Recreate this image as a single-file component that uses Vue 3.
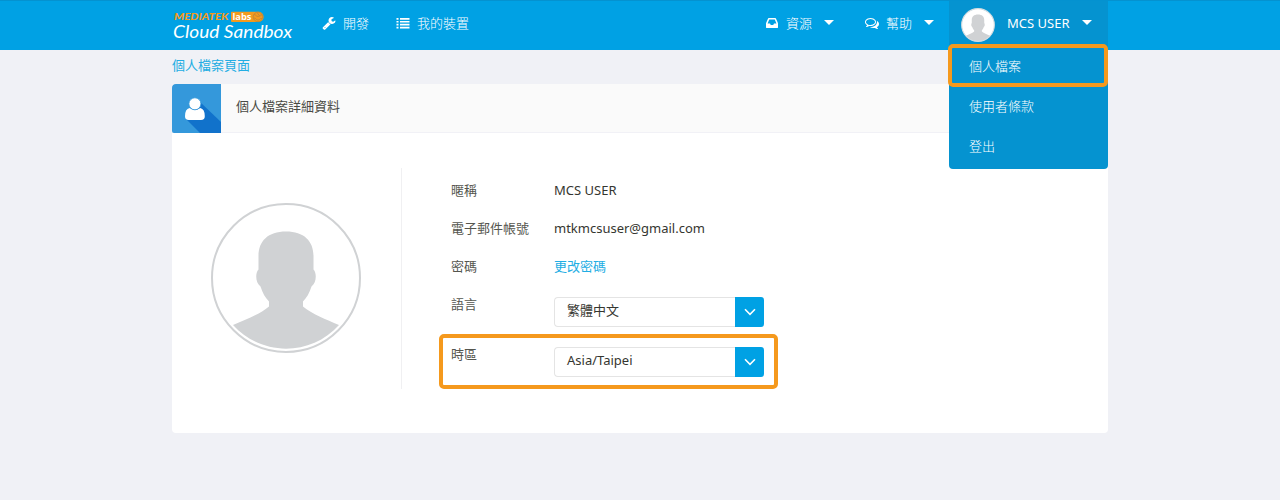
<script setup>
const profileMenu = ['個人檔案', '使用者條款', '登出']
const textRows = [
  { label: '暱稱', value: 'MCS USER', kind: 'caps' },
  { label: '電子郵件帳號', value: 'mtkmcsuser@gmail.com', kind: 'mail' },
  { label: '密碼', value: '更改密碼', kind: 'link' },
]
const selectRows = [
  { label: '語言', value: '繁體中文', marked: false },
  { label: '時區', value: 'Asia/Taipei', marked: true },
]
</script>

<template>
  <div class="page">
    <header class="topbar">
      <div class="container bar">
        <svg class="logo" width="122" height="34" viewBox="0 0 122 34">
          <text class="brand" x="2" y="11.800" textLength="54.500" lengthAdjust="spacingAndGlyphs">MEDIATEK</text>
          <path class="badge" d="M60 3.800h26.500a5 5 0 0 1 0 10.200H60a1 1 0 0 1-1-1V4.800a1 1 0 0 1 1-1z" />
          <circle class="ring" cx="86" cy="8.900" r="4.800" />
          <path class="wave" d="M82 6.500c2 0 2 2 4 2s2-2 4-1.500M82 10c2 0 2 2 4 2s2-2 4-1.500M85 4.500l3 4" />
          <text class="labs" x="60.500" y="12" textLength="19" lengthAdjust="spacingAndGlyphs">labs</text>
          <text class="cloud" x="1" y="30" textLength="119" lengthAdjust="spacingAndGlyphs">Cloud Sandbox</text>
        </svg>
        <a class="nav dev">
          <svg width="14" height="14" viewBox="0 0 1792 1792"><path d="M448 1472q0-26-19-45t-45-19-45 19-19 45 19 45 45 19 45-19 19-45zm644-420l-682 682q-37 37-90 37-52 0-91-37l-106-108q-38-36-38-90 0-53 38-91l681-681q39 98 114.500 173.500t173.500 114.500zm634-435q0 39-23 106-47 134-164.500 217.500t-258.500 83.500q-185 0-316.500-131.500t-131.500-316.500 131.500-316.500 316.500-131.500q58 0 121.500 16.500t107.500 46.500q16 11 16 28t-16 28l-293 169v224l193 107q5-3 79-48.500t135.500-81 70.500-35.500q15 0 23.500 10t8.500 25z" /></svg>
          <span>開發</span>
        </a>
        <a class="nav devices">
          <svg width="14" height="14" viewBox="0 0 14 14"><path d="M.500 2h2v1.700h-2zM.500 4.900h2v1.700h-2zM.500 7.800h2v1.700h-2zM.500 10.700h2v1.700h-2zM4 2h9.500v1.700H4zM4 4.900h9.500v1.700H4zM4 7.800h9.500v1.700H4zM4 10.700h9.500v1.700H4z" /></svg>
          <span>我的裝置</span>
        </a>
        <a class="nav resources">
          <svg width="14" height="14" viewBox="0 0 1792 1792"><path d="M1151 960h316q-1-3-2.500-8.500t-2.500-7.500l-212-496h-708l-212 496q-1 3-2.500 8.500t-2.500 7.500h316l95 192h320zm513 30v482q0 26-19 45t-45 19h-1408q-26 0-45-19t-19-45v-482q0-62 25-123l238-552q10-25 36.500-42t52.500-17h832q26 0 52.500 17t36.500 42l238 552q25 61 25 123z" /></svg>
          <span>資源</span><i class="caret"></i>
        </a>
        <a class="nav help">
          <svg width="14" height="14" viewBox="0 0 1792 1792"><path d="M704 384q-153 0-286 52t-211.500 141-78.500 191q0 82 53 158t149 132l97 56-35 84q34-20 62-39l44-31 53 10q78 14 153 14 153 0 286-52t211.500-141 78.500-191-78.500-191-211.500-141-286-52zm0-128q191 0 353.500 68.500t256.500 186.500 94 257-94 257-256.500 186.500-353.500 68.500q-86 0-176-16-124 88-278 128-36 9-86 16h-3q-11 0-20.500-8t-11.500-21q-1-3-1-6.500t.5-6.500 2-6l2.500-5 3.500-5.500 4-5 4.500-5 4-4.500q5-6 23-25t26-29.500 22.500-29 25-38.500 20.500-44q-124-72-195-177t-71-224q0-139 94-257t256.500-186.500 353.500-68.500zm822 1169q10 24 20.500 44t25 38.500 22.500 29 26 29.500 23 25q1 1 4 4.500t4.500 5 4 5 3.500 5.500l2.500 5 2 6 .5 6.500-1 6.500q-3 14-13 22t-22 7q-50-7-86-16-154-40-278-128-90 16-176 16-271 0-472-132 58 4 88 4 161 0 309-45t264-129q125-92 192-212t67-254q0-77-23-152 129 71 204 178t75 230q0 120-71 224.500t-195 176.500z" /></svg>
          <span>幫助</span><i class="caret"></i>
        </a>
        <div class="user">
          <svg class="face" width="34" height="34" viewBox="0 0 150 150">
            <circle cx="75" cy="75" r="72" fill="#fff" stroke="#d5dde1" stroke-width="5" />
            <use href="#person" />
          </svg>
          <span class="username">MCS USER</span><i class="caret"></i>
          <ul class="menu">
            <li v-for="(item, i) in profileMenu" :key="item" :class="{ marked: i === 0 }">{{ item }}</li>
          </ul>
        </div>
      </div>
    </header>

    <main class="container">
      <div class="crumb">個人檔案頁面</div>
      <section class="card">
        <div class="card-head">
          <svg width="49" height="49" viewBox="0 0 49 49">
            <path fill="#3498db" d="M2 0h47v49H2a2 2 0 0 1-2-2V2a2 2 0 0 1 2-2z" />
            <path fill="#1172cb" d="M27.500 17.500L49 38V49H28L14.500 35.500z" />
            <path fill="#fff" d="M17.500 24Q13 25 13 32.200q0 3.800 3.800 3.800h12.200q3.800 0 3.800-3.800Q32.800 25 28.300 24q-5.400 4-10.800 0z" />
            <circle cx="22.900" cy="19.800" r="6" fill="#fff" stroke="#3498db" stroke-width=".8" />
          </svg>
          <h1>個人檔案詳細資料</h1>
        </div>
        <div class="card-body">
          <div class="portrait">
            <svg width="150" height="150" viewBox="0 0 150 150">
              <defs>
                <path id="person" fill="#d0d2d4" d="M75 28.500C57 28.500 47.500 38 47.500 53V66.500C44 70 44.500 80 49.500 83.500C51.500 90 54.500 95 58 98.500V103.500C49 111 35 116.500 22 122C50 153.500 100 153.500 128 122C115 116.500 101 111 92 103.500V98.500C95.500 95 98.500 90 100.500 83.500C105.500 80 106 70 102.500 66.500V53C102.500 38 93 28.500 75 28.500Z" />
              </defs>
              <circle cx="75" cy="75" r="74" fill="#fff" stroke="#d0d2d4" stroke-width="2" />
              <use href="#person" />
            </svg>
          </div>
          <div class="fields">
            <div v-for="row in textRows" :key="row.label" class="row">
              <span class="label">{{ row.label }}</span>
              <span :class="row.kind">{{ row.value }}</span>
            </div>
            <div v-for="row in selectRows" :key="row.label" class="row choice" :class="{ marked: row.marked }">
              <span class="label">{{ row.label }}</span>
              <div class="select">
                <span class="value">{{ row.value }}</span>
                <span class="arrow">
                  <svg width="12" height="8" viewBox="0 0 12 8"><path d="M1 1.300l5 5 5-5" /></svg>
                </span>
              </div>
            </div>
          </div>
        </div>
      </section>
    </main>
  </div>
</template>

<style>
body { background: #f0f1f6; }
</style>

<style scoped>
* { box-sizing: border-box; }
.page {
  height: 500px;
  overflow: hidden;
  background: #f0f1f6;
  color: #353630;
  font: 13px/20px "Noto Sans", "Noto Sans CJK TC", sans-serif;
}
.container { width: 936px; margin: 0 auto; }
.topbar { height: 50px; background: #00a1e4; border-top: 1px solid #0492d0; }
.bar { display: flex; height: 49px; color: #fff; }
.logo { margin-top: 7px; flex: none; }
.brand { font: italic 900 9px Lato, sans-serif; fill: #f39a1e; }
.badge { fill: #f39a1e; }
.ring, .wave { fill: none; stroke: #ba8538; stroke-width: .8; }
.labs { font: 700 9.5px "Open Sans", sans-serif; fill: #fff; }
.cloud { font: italic 400 17.5px Lato, sans-serif; fill: #fff; }
.nav { display: flex; align-items: center; height: 43px; font-weight: 300; }
.nav svg { width: 14px; fill: #fff; margin-right: 7px; flex: none; margin-top: 1px; }
.dev { margin-left: 28px; }
.devices { margin-left: 27px; }
.resources { margin-left: auto; }
.help { margin-left: 31px; }
.caret { border: 5px solid transparent; border-top-color: #fff; border-bottom: 0; margin-left: 12px; }
.user {
  position: relative;
  display: flex;
  align-items: center;
  width: 159px;
  height: 49px;
  margin-left: 15px;
  padding: 0 0 6px 12px;
  background: #0593d0;
}
.face { flex: none; margin-top: 5px; }
.username { margin-left: 12px; width: 64px; white-space: nowrap; }
.user .caret { margin-left: 11px; }
.menu {
  position: absolute;
  left: 0;
  top: 45px;
  z-index: 1;
  width: 159px;
  height: 123px;
  margin: 0;
  padding: 0;
  list-style: none;
  background: #0593d0;
  border-radius: 0 0 4px 4px;
  font-weight: 300;
}
.menu li { height: 40px; line-height: 40px; padding-left: 20px; }
.menu li.marked {
  width: 160px;
  height: 43px;
  margin: -2px 0 -1px -1px;
  border: 4px solid #f5991d;
  border-radius: 5px;
  padding-left: 17px;
  line-height: 37px;
}
.crumb { height: 34px; padding-top: 5px; color: #22ade3; }
.card { height: 349px; background: #fff; border-radius: 4px; overflow: hidden; }
.card-head { display: flex; height: 49px; background: #fafafa; border-bottom: 1px solid #f1f1f6; }
.card-head svg { flex: none; }
h1 { margin: 12px 0 0 15px; font-size: 13px; font-weight: 400; color: #4a4b45; }
.card-body { display: flex; }
.portrait { width: 230px; height: 221px; margin-top: 35px; padding: 35px 0 0 39px; border-right: 1px solid #f0f0f2; }
.fields { padding: 37px 0 0 37px; }
.row { display: flex; width: 338px; height: 38px; padding: 10px 0 0 12px; white-space: nowrap; }
.label { width: 103px; color: #55564f; }
.fields .link { color: #22ade3; }
.choice { height: 49px; padding-top: 12px; margin-top: -2px; }
.choice.marked {
  position: relative;
  width: 339px;
  height: 55px;
  margin: 3px 0 0;
  padding: 6px 0 0 8px;
  border: 4px solid #f5991d;
  border-radius: 5px;
}
.select { display: flex; width: 210px; height: 30px; margin-top: 3px; }
.value { flex: 1; border: 1px solid #e4e4e4; border-right: 0; border-radius: 4px 0 0 4px; padding: 2px 0 0 12px; }
.arrow { display: flex; align-items: center; justify-content: center; width: 29px; background: #00a1e4; border-radius: 0 3px 3px 0; }
.arrow path { fill: none; stroke: #fff; stroke-width: 1.600; }
</style>
